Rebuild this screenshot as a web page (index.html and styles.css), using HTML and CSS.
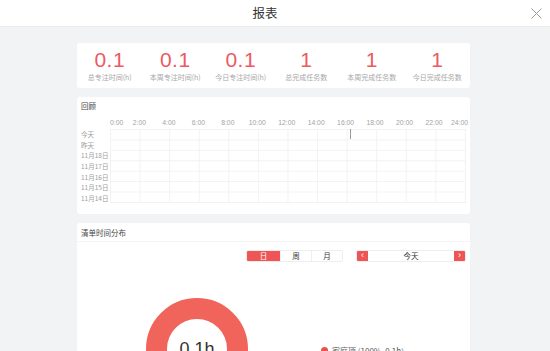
FILE: index.html
```html
<!DOCTYPE html>
<html lang="zh-CN">
<head>
<meta charset="utf-8">
<title>报表</title>
<link rel="stylesheet" href="styles.css">
</head>
<body>
<header class="topbar">
  <div class="title">报表</div>
  <button class="close" aria-label="关闭">
    <svg width="11" height="11" viewBox="0 0 11 11"><path d="M0.5 0.5L10.5 10.5M10.5 0.5L0.5 10.5" stroke="#9a9a9a" stroke-width="1" fill="none"/></svg>
  </button>
</header>
<main class="content">
  <section class="card stats">
    <div class="stat"><div class="num">0.1</div><div class="lbl">总专注时间(h)</div></div>
    <div class="stat"><div class="num">0.1</div><div class="lbl">本周专注时间(h)</div></div>
    <div class="stat"><div class="num">0.1</div><div class="lbl">今日专注时间(h)</div></div>
    <div class="stat"><div class="num">1</div><div class="lbl">总完成任务数</div></div>
    <div class="stat"><div class="num">1</div><div class="lbl">本周完成任务数</div></div>
    <div class="stat"><div class="num">1</div><div class="lbl">今日完成任务数</div></div>
  </section>

  <section class="card review">
    <div class="card-title">回顾</div>
    <div class="timeline">
      <div class="hours">
        <span class="h first">0:00</span>
        <span class="h"><i>2:00</i></span>
        <span class="h"><i>4:00</i></span>
        <span class="h"><i>6:00</i></span>
        <span class="h"><i>8:00</i></span>
        <span class="h"><i>10:00</i></span>
        <span class="h"><i>12:00</i></span>
        <span class="h"><i>14:00</i></span>
        <span class="h"><i>16:00</i></span>
        <span class="h"><i>18:00</i></span>
        <span class="h"><i>20:00</i></span>
        <span class="h last"><i>22:00</i><b>24:00</b></span>
      </div>
      <div class="days">
        <div>今天</div>
        <div>昨天</div>
        <div>11月18日</div>
        <div>11月17日</div>
        <div>11月16日</div>
        <div>11月15日</div>
        <div>11月14日</div>
      </div>
      <div class="grid">
        <span class="now"></span>
      </div>
    </div>
  </section>

  <section class="card dist">
    <div class="card-title divided">清单时间分布</div>
    <div class="controls">
      <div class="seg">
        <span class="active">日</span>
        <span>周</span>
        <span>月</span>
      </div>
      <div class="date">
        <span class="arrow">‹</span>
        <span class="day">今天</span>
        <span class="arrow">›</span>
      </div>
    </div>
    <div class="chart">
      <div class="donut"><span>0.1h</span></div>
      <div class="legend"><span class="dot"></span>家庭项 (100%, 0.1h)</div>
    </div>
  </section>
</main>
</body>
</html>
```
FILE: styles.css
```css
* { box-sizing: border-box; }
html, body {
  margin: 0;
  padding: 0;
  height: 100%;
  overflow: hidden;
}
body {
  background: #f2f3f5;
  font-family: "Noto Sans CJK SC", "Liberation Sans", sans-serif;
  color: #333;
}
.topbar {
  height: 27px;
  background: #fff;
  border-bottom: 1px solid #ececec;
  display: flex;
  align-items: center;
  justify-content: center;
  position: relative;
}
.title {
  font-size: 12.5px;
  color: #333;
  padding-right: 20px;
  line-height: 1;
}
.close {
  position: absolute;
  right: 8px;
  top: 8px;
  border: 0;
  background: none;
  padding: 0;
  width: 11px;
  height: 11px;
  display: block;
}
.close svg { display: block; }

.content {
  width: 393px;
  margin-left: 77px;
  padding-top: 16px;
  display: flex;
  flex-direction: column;
  gap: 9px;
}
.card {
  background: #fff;
  border-radius: 3px;
}

/* stats */
.stats {
  height: 45px;
  display: grid;
  grid-template-columns: repeat(6, 1fr);
  padding-top: 6px;
}
.stat {
  display: flex;
  flex-direction: column;
  align-items: center;
}
.num {
  font-family: "Liberation Sans", sans-serif;
  font-weight: 300;
  font-size: 21px;
  line-height: 21px;
  color: #ec5a5f;
  letter-spacing: 0.5px;
}
.lbl {
  font-size: 7px;
  color: #a8a8a8;
  line-height: 10px;
  margin-top: 2px;
  white-space: nowrap;
}

/* review */
.review {
  height: 117px;
  padding: 4px 4px 0 4px;
}
.card-title {
  font-size: 7.5px;
  line-height: 10px;
  color: #444;
  padding-left: 0;
}
.timeline {
  display: grid;
  grid-template-columns: 29px 1fr;
  grid-template-rows: 11px 74px;
  margin-top: 7px;
}
.hours {
  grid-column: 2;
  grid-row: 1;
  display: grid;
  grid-template-columns: repeat(12, 1fr);
  font-family: "Liberation Sans", sans-serif;
  font-size: 6.8px;
  color: #a3a3a3;
  line-height: 10px;
  margin-right: -2px;
}
.h { display: flex; justify-content: space-between; }
.h i { font-style: normal; transform: translateX(-50%); }
.h b { font-weight: normal; }
.days {
  grid-column: 1;
  grid-row: 2;
  display: grid;
  grid-template-rows: repeat(7, 1fr);
  font-size: 6.5px;
  color: #9d9d9d;
  align-items: center;
  white-space: nowrap;
}
.grid {
  grid-column: 2;
  grid-row: 2;
  position: relative;
  border-right: 1px solid #f2f2f2;
  border-bottom: 1px solid #f2f2f2;
  background-image:
    linear-gradient(to right, #f2f2f2 1px, transparent 1px),
    linear-gradient(to bottom, #f2f2f2 1px, transparent 1px);
  background-size: calc(100% / 12) 100%, 100% calc(100% / 7);
}
.now {
  position: absolute;
  left: 240px;
  top: 0;
  width: 1px;
  height: 10px;
  background: #999;
}

/* distribution */
.dist {
  height: 140px;
  padding: 5px 4px 0 4px;
}
.divided {
  padding-bottom: 3px;
  border-bottom: 1px solid #f5f5f5;
  margin: 0 -4px;
  padding-left: 4px;
}
.controls {
  display: flex;
  justify-content: flex-end;
  gap: 13px;
  margin-top: 8px;
}
.seg {
  display: flex;
  height: 12px;
  border: 1px solid #eee;
  border-radius: 2px;
  overflow: hidden;
}
.seg span {
  width: 31px;
  font-size: 7.5px;
  line-height: 10px;
  text-align: center;
  color: #333;
  border-left: 1px solid #eee;
}
.seg span:first-child { border-left: 0; width: 33px; }
.seg .active {
  background: #f05555;
  color: #fff;
}
.date {
  width: 110px;
  height: 12px;
  display: flex;
  border: 1px solid #eee;
  border-radius: 2px;
  overflow: hidden;
}
.arrow {
  width: 11px;
  background: #f05555;
  color: #fff;
  font-size: 9px;
  line-height: 9px;
  text-align: center;
  font-family: "Liberation Sans", sans-serif;
}
.day {
  flex: 1;
  font-size: 7.5px;
  line-height: 10px;
  text-align: center;
  color: #333;
}
.chart {
  display: flex;
  align-items: flex-start;
  padding-left: 65px;
  margin-top: 36px;
}
.donut {
  width: 102px;
  height: 102px;
  border-radius: 50%;
  border: 21px solid #f0645c;
  display: flex;
  align-items: center;
  justify-content: center;
}
.donut span {
  font-family: "Liberation Sans", sans-serif;
  font-size: 18px;
  color: #333;
}
.legend {
  margin-left: 73px;
  margin-top: 47px;
  display: flex;
  align-items: center;
  font-size: 8px;
  color: #555;
  white-space: nowrap;
}
.dot {
  width: 7px;
  height: 7px;
  border-radius: 50%;
  background: #e9504f;
  margin-right: 4px;
}
```
